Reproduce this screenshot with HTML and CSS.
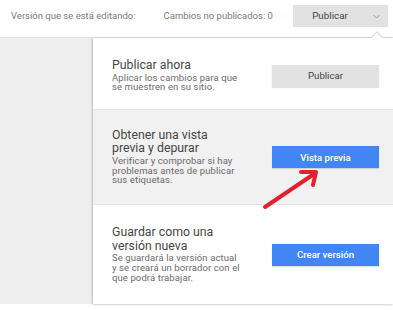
FILE: index.html
```html
<!DOCTYPE html>
<html lang="es">
<head>
<meta charset="utf-8">
<title>Publicar</title>
<link rel="stylesheet" href="styles.css">
</head>
<body>
<div class="page">
  <header class="topbar">
    <span class="top-text">Versión que se está editando:</span>
    <span class="top-text changes">Cambios no publicados: 0</span>
    <div class="split-btn">
      <span class="split-main">Publicar</span>
      <span class="split-arrow">
        <svg width="7" height="5" viewBox="0 0 7 5"><path d="M0.5 1 L3.5 4 L6.5 1" fill="none" stroke="#9a9a9a" stroke-width="1"/></svg>
      </span>
    </div>
  </header>
  <div class="main">
    <aside class="sidebar"></aside>
    <section class="panel">
      <div class="notch"></div>
      <div class="option opt1">
        <div class="opt-text">
          <div class="opt-title">Publicar ahora</div>
          <div class="opt-desc">Aplicar los cambios para que<br>se muestren en su sitio.</div>
        </div>
        <button class="btn btn-gray">Publicar</button>
      </div>
      <div class="option opt2 shaded">
        <div class="opt-text">
          <div class="opt-title">Obtener una vista<br>previa y depurar</div>
          <div class="opt-desc">Verificar y comprobar si hay<br>problemas antes de publicar<br>sus etiquetas.</div>
        </div>
        <button class="btn btn-blue">Vista previa</button>
      </div>
      <div class="option opt3">
        <div class="opt-text">
          <div class="opt-title">Guardar como una<br>versión nueva</div>
          <div class="opt-desc">Se guardará la versión actual<br>y se creará un borrador con el<br>que podrá trabajar.</div>
        </div>
        <button class="btn btn-blue">Crear versión</button>
      </div>
    </section>
  </div>
  <svg class="annot" width="393" height="310" viewBox="0 0 393 310">
    <g stroke="#e3202b" stroke-width="4" stroke-linecap="round" stroke-linejoin="round" fill="none">
      <path d="M265 207 L314 174"/>
      <path d="M301 172 L316 172 L313 185"/>
    </g>
  </svg>
</div>
</body>
</html>
```

FILE: styles.css
```css
* { box-sizing: border-box; }
html, body { margin: 0; padding: 0; background: #ffffff; }
body { font-family: Roboto, "Liberation Sans", Arial, sans-serif; }

.page {
  position: relative;
  width: 393px;
  height: 310px;
  overflow: hidden;
  background: #ffffff;
}

.topbar {
  display: flex;
  align-items: flex-start;
  height: 38px;
  padding: 5px 5px 0 11px;
  border-bottom: 1px solid #e3e3e3;
}
.top-text {
  font-size: 9.5px;
  line-height: 22px;
  color: #7a7a7a;
}
.changes { margin-left: 28px; }

.split-btn {
  margin-left: auto;
  display: flex;
  height: 22px;
  width: 95px;
  background: #e2e2e2;
}
.split-main {
  flex: 1;
  text-align: center;
  font-size: 9.8px;
  line-height: 22px;
  color: #444444;
  padding-left: 2px;
}
.split-arrow {
  width: 23px;
  display: flex;
  align-items: center;
  justify-content: center;
}

.main {
  display: flex;
  height: 266px;
}
.sidebar {
  width: 93px;
  background: #eeeeee;
}
.panel {
  position: relative;
  flex: 1;
  background: #ffffff;
  box-shadow: -1px 0 2px rgba(0,0,0,0.18), 0 1px 2px rgba(0,0,0,0.12);
}
.notch {
  position: absolute;
  top: -5px;
  left: 280px;
  width: 8px;
  height: 8px;
  background: #ffffff;
  border-left: 1px solid #d6d6d6;
  border-top: 1px solid #d6d6d6;
  transform: rotate(45deg);
}

.option {
  display: flex;
  align-items: center;
  padding: 0 14px 0 19px;
}
.opt1 { height: 72px; padding-top: 4px; border-bottom: 1px solid #e4e4e4; }
.opt2 { height: 95px; border-bottom: 1px solid #e4e4e4; }
.opt3 { height: 99px; }
.shaded { background: #f1f1f1; }

.opt-text { flex: 1; }
.opt-title {
  font-size: 12.3px;
  line-height: 13.6px;
  color: #454545;
}
.opt-desc {
  font-size: 9.5px;
  line-height: 9.8px;
  color: #6a6a6a;
  letter-spacing: 0.1px;
}

.btn {
  width: 107px;
  height: 22px;
  border: none;
  padding: 0;
  font-family: inherit;
  font-size: 9.6px;
  box-shadow: 0 1px 1px rgba(0,0,0,0.12);
}
.btn-gray { background: #e2e2e2; color: #444444; }
.btn-blue { background: #4285f4; color: #ffffff; font-weight: 500; }

.annot {
  position: absolute;
  left: 0;
  top: 0;
  pointer-events: none;
}
```
